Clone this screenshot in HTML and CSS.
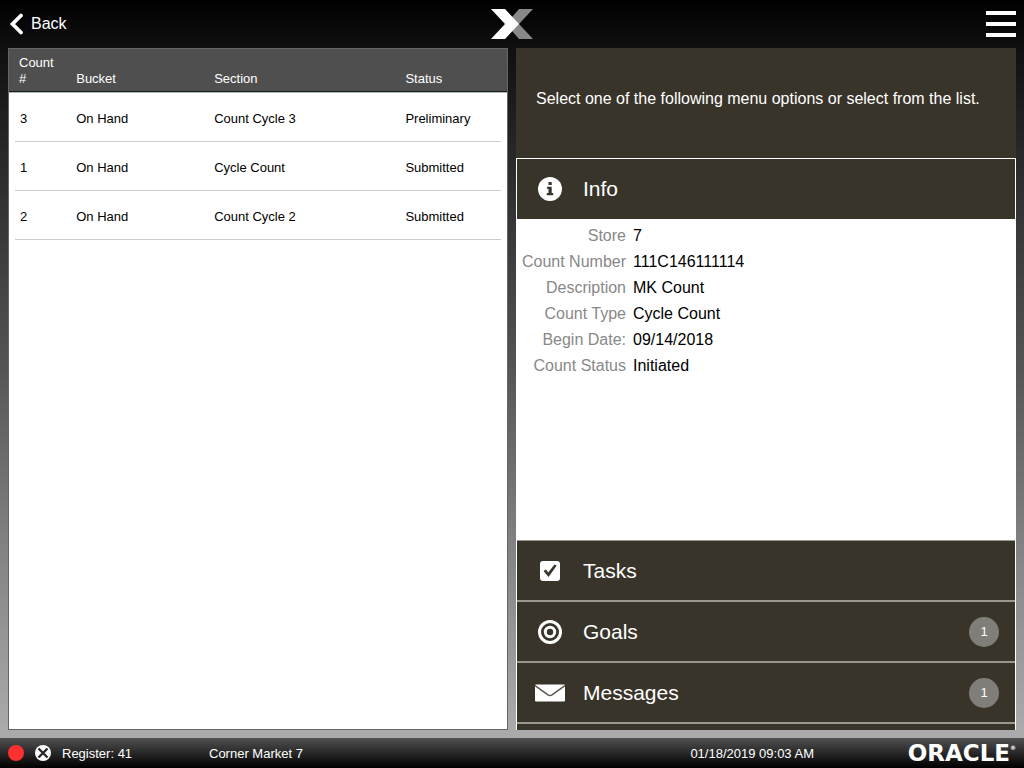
FILE: index.html
```html
<!DOCTYPE html>
<html lang="en">
<head>
<meta charset="utf-8">
<title>Inventory Count</title>
<link rel="stylesheet" href="styles.css">
</head>
<body>
<header class="topbar">
  <button class="back" type="button">
    <svg class="back-icon" viewBox="0 0 16 22" aria-hidden="true"><path d="M13 2.500 4.500 11l8.500 8.500" fill="none" stroke="#fff" stroke-width="3.800" stroke-linecap="round" stroke-linejoin="miter"/></svg>
    Back
  </button>
  <svg class="logo" viewBox="0 0 42 30" role="img" aria-label="Xstore"><path d="M28 0h14L28 15l14 15H28L15 15z" fill="#888"/><path d="M0 0h14l14 15-14 15H0l14-15z" fill="#fff"/></svg>
  <button class="menu" type="button" aria-label="Menu">
    <svg class="menu-icon" viewBox="0 0 30 26" aria-hidden="true"><path d="M0 0h30v4H0zM0 11h30v4H0zM0 22h30v4H0z" fill="#fff"/></svg>
  </button>
</header>
<main class="content">
  <section class="list-panel">
    <table class="counts">
      <thead>
        <tr><th class="col-id" scope="col">Count<br>#</th><th class="col-bucket" scope="col">Bucket</th><th class="col-section" scope="col">Section</th><th scope="col">Status</th></tr>
      </thead>
      <tbody>
        <tr><td>3</td><td>On Hand</td><td>Count Cycle 3</td><td>Preliminary</td></tr>
        <tr><td>1</td><td>On Hand</td><td>Cycle Count</td><td>Submitted</td></tr>
        <tr><td>2</td><td>On Hand</td><td>Count Cycle 2</td><td>Submitted</td></tr>
      </tbody>
    </table>
  </section>
  <section class="side-panel">
    <p class="prompt">Select one of the following menu options or select from the list.</p>
    <div class="accordion">
      <button class="tab tab-open" type="button" aria-expanded="true">
        <span class="tab-icon"><svg width="24" height="24" viewBox="0 0 24 24" aria-hidden="true"><circle cx="12" cy="12" r="12" fill="#fff"/><path d="M10.500 5h3.200v3h-3.200zM9 9.700h4.700v6.300H15.200v2.200H8.800V16h1.700v-4.200H9z" fill="#39342a"/></svg></span>
        Info
      </button>
      <dl class="details">
        <dt>Store</dt><dd>7</dd>
        <dt>Count Number</dt><dd>111C146111114</dd>
        <dt>Description</dt><dd>MK Count</dd>
        <dt>Count Type</dt><dd>Cycle Count</dd>
        <dt>Begin Date:</dt><dd>09/14/2018</dd>
        <dt>Count Status</dt><dd>Initiated</dd>
      </dl>
      <button class="tab" type="button">
        <span class="tab-icon"><svg width="20" height="20" viewBox="0 0 20 20" aria-hidden="true"><rect width="20" height="20" rx="3" fill="#fff"/><path d="M3.500 10 6 8.500l2.200 3L14.500 3.500l2.200 1L8.600 16z" fill="#39342a"/></svg></span>
        Tasks
      </button>
      <button class="tab" type="button">
        <span class="tab-icon"><svg width="24" height="24" viewBox="0 0 24 24" aria-hidden="true"><g fill="none" stroke="#fff" stroke-width="3"><circle cx="12" cy="12" r="10.500"/><circle cx="12" cy="12" r="4.700"/></g></svg></span>
        Goals <span class="badge">1</span>
      </button>
      <button class="tab" type="button">
        <span class="tab-icon"><svg width="30" height="18" viewBox="0 0 30 18" aria-hidden="true"><rect width="30" height="17" y=".5" rx="1" fill="#fff"/><path d="M0 1.500 13 10.800q2 1.300 4 0L30 1.500" fill="none" stroke="#5a554b" stroke-width="1.500"/></svg></span>
        Messages <span class="badge">1</span>
      </button>
      <div class="more"></div>
    </div>
  </section>
</main>
<footer class="statusbar">
  <span class="dot"></span>
  <svg class="offline" viewBox="0 0 16 16" role="img" aria-label="Offline"><circle cx="8" cy="8" r="8" fill="#fff"/><path d="M3.500 3.500l9 9M12.500 3.500l-9 9" stroke="#292929" stroke-width="2.400"/></svg>
  <span class="register">Register: 41</span>
  <span class="store">Corner Market 7</span>
  <time class="clock" datetime="2019-01-18T09:03">01/18/2019 09:03 AM</time>
  <span class="brand">ORACLE<sup class="mark">®</sup></span>
</footer>
</body>
</html>
```
FILE: styles.css
```css
* { box-sizing: border-box; }

body {
  display: flex;
  flex-direction: column;
  height: 100vh;
  margin: 0;
  overflow: hidden;
  background: linear-gradient(#000 0, #0f0f0f 6%, #282828 20%, #555 48%, #808080 70%, #aaa 95%);
  font-family: "Liberation Sans", Arial, sans-serif;
  font-size: 16px;
  color: #000;
}

button {
  border: 0;
  padding: 0;
  background: none;
  color: #fff;
  font: inherit;
}

.topbar {
  display: grid;
  grid-template-columns: 1fr auto 1fr;
  align-items: center;
  height: 48px;
  padding: 0 8px;
}
.back {
  display: flex;
  align-items: center;
  gap: 7px;
  justify-self: start;
}
.back-icon { width: 16px; height: 22px; }
.logo { width: 42px; height: 30px; }
.menu { justify-self: end; height: 26px; }
.menu-icon { display: block; width: 30px; height: 26px; }

.content {
  display: grid;
  grid-template-columns: 1fr 1fr;
  gap: 8px;
  flex: 1;
  min-height: 0;
  padding: 0 8px 8px;
}

.list-panel {
  border: 1px solid #66665f;
  background: #fff;
}
.counts {
  width: 100%;
  border-collapse: separate;
  border-spacing: 0;
  table-layout: fixed;
  font-size: 13px;
  line-height: 16px;
}
.col-id { width: 13.5%; }
.col-bucket { width: 27.7%; }
.col-section { width: 38.4%; }
.counts th {
  padding: 6px 0 4px;
  border-bottom: 1px solid #1c1c1c;
  background: #4f4f4f;
  color: #fff;
  font-weight: normal;
  text-align: left;
  vertical-align: bottom;
}
.counts th:first-child { padding-left: 10px; }
.counts td {
  height: 49px;
  padding: 3px 0 0;
  background: linear-gradient(#ccc, #ccc) left bottom / 100% 1px no-repeat;
}
.counts td:first-child {
  padding-left: 11px;
  background-position: right bottom;
  background-size: calc(100% - 6px) 1px;
}
.counts td:last-child { background-size: calc(100% - 6px) 1px; }
.counts tbody tr:first-child td { height: 50px; box-shadow: inset 0 1px #a9bcb8; }

.side-panel {
  display: flex;
  flex-direction: column;
  min-height: 0;
}
.prompt {
  flex: none;
  height: 110px;
  margin: 0;
  padding: 41px 20px 0;
  background: #39342a;
  color: #fff;
  line-height: 20px;
}
.accordion {
  display: flex;
  flex-direction: column;
  flex: 1;
  min-height: 0;
  border: 1px solid #fff;
  border-bottom: 0;
}
.tab {
  display: flex;
  align-items: center;
  flex: none;
  height: 61px;
  border-bottom: 2px solid #99978f;
  background: #39342a;
  font-size: 21px;
  text-align: left;
}
.tab-open { height: 60px; border-bottom: 0; }
.tab-icon {
  display: flex;
  justify-content: center;
  width: 66px;
}
.badge {
  width: 30px;
  margin: 0 16px 0 auto;
  border-radius: 15px;
  background: #807e78;
  font-size: 13px;
  line-height: 30px;
  text-align: center;
}
.details {
  display: grid;
  grid-template-columns: 109px 1fr;
  grid-auto-rows: 26px;
  column-gap: 7px;
  flex: 1;
  min-height: 0;
  margin: 0;
  padding-top: 4px;
  border-bottom: 1px solid #99978f;
  background: #fff;
  line-height: 26px;
}
.details dt { color: #888; text-align: right; }
.details dd { margin: 0; }
.more { flex: none; height: 6px; background: #39342a; }

.statusbar {
  display: flex;
  align-items: center;
  height: 30px;
  padding: 0 8px;
  background: linear-gradient(#505050, #000);
  color: #fff;
  font-size: 13px;
}
.dot {
  width: 16px;
  height: 16px;
  border-radius: 50%;
  background: #ff3030;
}
.offline { width: 16px; height: 16px; margin: 0 11px; }
.register { width: 147px; }
.clock { margin-left: auto; }
.brand {
  display: flex;
  justify-content: flex-end;
  width: 202px;
  font-family: "DejaVu Sans", sans-serif;
  font-size: 23px;
  font-weight: bold;
  line-height: 30px;
}
.mark { font-size: 6px; line-height: 20px; }
```
